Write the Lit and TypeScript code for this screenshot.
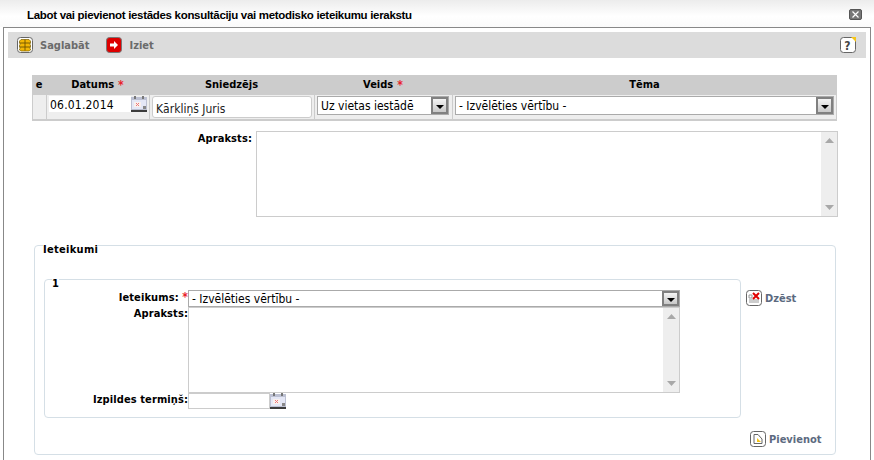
import { LitElement, html, css, svg } from "lit";
import { customElement } from "lit/decorators.js";

const calendar = html`<svg class="cal" width="16" height="16" viewBox="0 0 16 16" shape-rendering="crispEdges">
  <rect x="0" y="1" width="16" height="15" fill="#bcc0d2"/>
  <rect x="3" y="0" width="2" height="3" fill="#777"/><rect x="11" y="0" width="2" height="3" fill="#777"/>
  <rect x="1" y="4" width="14" height="9" fill="#e4e7f6"/>
  <rect x="3" y="6" width="7" height="5" fill="#f8f0ee"/>
  <path d="M5 7l3 3M8 7l-3 3" stroke="#e77" fill="none"/>
  <rect x="0" y="14" width="16" height="2" fill="#3c3c3c"/>
  <rect x="12" y="10" width="3" height="3" fill="#888"/>
</svg>`;

const arrow = html`<span class="arrow"><svg width="8" height="4" viewBox="0 0 8 4"><path d="M0 0h8L4 4z" fill="#000"/></svg></span>`;

const scrollbar = html`<div class="scroll">
  <svg width="9" height="5" viewBox="0 0 9 5"><path d="M0 5h9L4.5 0z" fill="#a8a8a8"/></svg>
  <svg width="9" height="5" viewBox="0 0 9 5"><path d="M0 0h9L4.5 5z" fill="#a8a8a8"/></svg>
</div>`;

const frame = svg`<rect x="0.5" y="0.5" width="15" height="15" rx="3" fill="#fff" stroke="#666"/>`;

@customElement("app-root")
export class AppRoot extends LitElement {
  static styles = css`
    :host { display: block; width: 874px; height: 460px; overflow: hidden; background: #fff;
      font-family: "DejaVu Sans Condensed", "DejaVu Sans", sans-serif; font-stretch: condensed; font-size: 12px; color: #000; }
    .titlebar { height: 27px; box-sizing: border-box; background: linear-gradient(#ececec, #fff 60%, #fafafa);
      display: flex; align-items: center; justify-content: space-between; padding: 3px 12px 0 27px; }
    .title { font-family: "Liberation Sans", sans-serif; font-stretch: normal; font-weight: 700; font-size: 11.5px; letter-spacing: -0.31px; }
    .close { width: 13px; height: 11px; background: #777; border: 1px solid #555; border-radius: 2px; display: flex; margin-top: -1px; box-sizing: border-box; align-items: center; justify-content: center; }
    .window { margin: 0 3px; height: 433px; box-sizing: border-box; border: 1px solid #888; border-bottom: none; padding: 4px 4px 0; }
    .toolbar { height: 26px; background: #dcdcdc; display: flex; align-items: center; padding: 0 10px 0 9px; }
    .tool { display: flex; align-items: center; gap: 7px; font-weight: 700; color: #6b6b6b; font-size: 11px; margin-right: 17px; }
    .help { margin-left: auto; }
    .content { padding: 17px 28px 0 24px; }
    .grid { display: grid; grid-template-columns: 14px 103px 165px 138px 385px; width: 805px; }
    .th { height: 20px; background: #ccc; font-weight: 700; font-size: 11px; display: flex; align-items: center; justify-content: center; gap: 4px; padding-bottom: 1px; box-sizing: border-box; }
    .star { color: #e8222a; font-size: 12px; font-weight: 700; }
    .td { height: 26px; background: #eee; border-bottom: 2px solid #ccc; box-sizing: border-box; display: flex; align-items: flex-start; padding-top: 1px; border-left: 1px solid #ccc; }
    .td.last { border-right: 1px solid #ccc; }
    .input { background: #fff; font-size: 12px; box-sizing: border-box; display: flex; align-items: center; color: #111; }
    .date { width: 82px; height: 16px; margin-left: 2px; padding: 1px 0 0 1px; font-size: 12px; letter-spacing: .2px; color: #000; }
    .cal { flex: none; }
    .name { width: 160px; height: 22px; margin: 0 0 0 2px; border: 1px solid #ccc; border-radius: 3px; padding: 3px 0 0 3px; color: #222; }
    .select { height: 19px; border: 1px solid #aaa; background: #fff; display: flex; align-items: center; justify-content: space-between; box-sizing: border-box; padding-left: 3px; }
    .veids { width: 132px; margin-left: 2px; }
    .tema { width: 379px; margin-left: 2px; padding-left: 3px; }
    .arrow { width: 17px; height: 17px; flex: none; box-sizing: border-box; border: 2px solid #808080; background: linear-gradient(#f4f4f4, #c8c8c8); display: flex; align-items: center; justify-content: center; padding-top: 3px; }
    .row-desc { display: flex; margin-top: 10px; height: 86px; }
    label { font-weight: 700; font-size: 11px; letter-spacing: .1px; display: block; text-align: right; }
    .l1 { width: 220px; padding: 1px 4px 0 0; }
    .area { border: 1px solid #ccc; box-sizing: border-box; display: flex; justify-content: flex-end; background: #fff; }
    .a1 { width: 582px; height: 86px; }
    .scroll { width: 16px; background: #eee; display: flex; flex-direction: column; justify-content: space-between; align-items: center; padding: 6px 0; box-sizing: border-box; }
    fieldset { margin: 0; padding: 0; border: 1px solid #d5dfe6; border-radius: 4px; box-sizing: border-box; min-width: 0; }
    legend { font-weight: 700; font-size: 11px; padding: 0; height: 4px; line-height: 13px; }
    .outer { width: 802px; height: 212px; margin: 26px 0 0 2px; padding: 0 0 0 9px; }
    .outer > legend { margin-left: -1px; letter-spacing: .3px; }
    .line { display: flex; align-items: flex-start; margin-top: 30px; }
    .inner { width: 697px; height: 141px; flex: none; }
    .inner > legend { margin-left: 7px; }
    .form { display: grid; grid-template-columns: 143px 492px; margin-top: 9px; }
    .l2 { height: 17px; line-height: 14px; }
    .s2 { width: 492px; height: 17px; }
    .s2 .arrow { height: 15px; }
    .a2 { width: 492px; height: 86px; }
    .dt { display: flex; }
    .date2 { width: 82px; height: 16px; border: 1px solid #ccc; }
    .actions { display: flex; align-items: center; gap: 3px; font-weight: 700; color: #5c6a80; font-size: 11px; }
    .dzest { margin: 13px 0 0 5px; }
    .add { margin: 13px 0 0 706px; }
  `;

  render() {
    return html`
      <div class="titlebar">
        <div class="title">Labot vai pievienot iestādes konsultāciju vai metodisko ieteikumu ierakstu</div>
        <div class="close"><svg width="7" height="7" viewBox="0 0 7 7"><path d="M0.5 0.5l6 6M6.5 0.5l-6 6" stroke="#fff" stroke-width="1.2"/></svg></div>
      </div>
      <div class="window">
        <div class="toolbar">
          <div class="tool">
            <svg width="16" height="16" viewBox="0 0 16 16">${frame}
              <path d="M4 2.5h8l1.5 1.5v2l-1 1 1 1v2l-1 1 1 1v1l-1.5 1H4l-1.5-1v-1l1-1-1-1V8l1-1-1-1V4z" fill="#f2b705" stroke="#7d6000" stroke-width=".7"/>
              <path d="M2.5 6h11M2.5 10h11M8 2.5v11" stroke="#6e5400" stroke-width=".9" fill="none"/>
            </svg>
            <span>Saglabāt</span>
          </div>
          <div class="tool">
            <svg width="16" height="16" viewBox="0 0 16 16">
              <rect x="0.5" y="0.5" width="15" height="15" rx="3" fill="#dd0000" stroke="#777"/>
              <path d="M4 6.5h4V4l4 4-4 4V9.5H4z" fill="#fff"/>
            </svg>
            <span>Iziet</span>
          </div>
          <div class="help">
            <svg width="16" height="16" viewBox="0 0 16 16" style="display:block">${frame}
              <path d="M11 0h5v5z" fill="#f5c518"/>
              <text x="7.5" y="13" text-anchor="middle" font-size="12" font-weight="700" font-family="DejaVu Sans" fill="#444">?</text>
            </svg>
          </div>
        </div>
        <div class="content">
          <div class="grid">
            <div class="th">e</div>
            <div class="th">Datums <span class="star">*</span></div>
            <div class="th">Sniedzējs</div>
            <div class="th">Veids <span class="star">*</span></div>
            <div class="th">Tēma</div>
            <div class="td"></div>
            <div class="td"><div class="input date">06.01.2014</div>${calendar}</div>
            <div class="td"><div class="input name">Kārkliņš Juris</div></div>
            <div class="td"><div class="select veids"><span>Uz vietas iestādē</span>${arrow}</div></div>
            <div class="td last"><div class="select tema"><span>- Izvēlēties vērtību -</span>${arrow}</div></div>
          </div>
          <div class="row-desc">
            <label class="l1">Apraksts:</label>
            <div class="area a1">${scrollbar}</div>
          </div>
          <fieldset class="outer">
            <legend>Ieteikumi</legend>
            <div class="line">
              <fieldset class="inner">
                <legend>1</legend>
                <div class="form">
                  <label class="l2">Ieteikums: <span class="star">*</span></label>
                  <div class="select s2"><span>- Izvēlēties vērtību -</span>${arrow}</div>
                  <label class="l2">Apraksts:</label>
                  <div class="area a2">${scrollbar}</div>
                  <label class="l2">Izpildes termiņš:</label>
                  <div class="dt"><div class="input date2"></div>${calendar}</div>
                </div>
              </fieldset>
              <div class="actions dzest">
                <svg width="16" height="16" viewBox="0 0 16 16">${frame}
                  <path d="M3 5h3v3H3zM3 10h10M3 12h10" stroke="#999" fill="none"/>
                  <path d="M7 3l6 6M13 3l-6 6" stroke="#e00000" stroke-width="2"/>
                </svg><span>Dzēst</span>
              </div>
            </div>
            <div class="actions add">
              <svg width="16" height="16" viewBox="0 0 16 16">${frame}
                <path d="M4 3.5h4l4 4.5v4.5H4z" fill="#fff" stroke="#666"/>
                <path d="M7 7l4 4H7z" fill="#f5c518"/>
              </svg><span>Pievienot</span>
            </div>
          </fieldset>
        </div>
      </div>
    `;
  }
}
